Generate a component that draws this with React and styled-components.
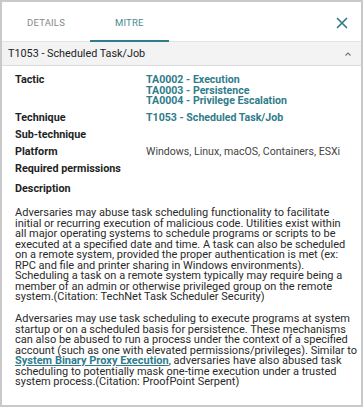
import React, { useState } from 'react';
import styled, { createGlobalStyle } from 'styled-components';

const GlobalStyle = createGlobalStyle`
  html, body {
    margin: 0;
    padding: 0;
    background: #ffffff;
  }
  * {
    box-sizing: border-box;
  }
`;

const font = `Roboto, "Liberation Sans", sans-serif`;
const teal = '#2f7c8b';

const details = {
  id: 'T1053',
  name: 'Scheduled Task/Job',
  tactics: ['TA0002 - Execution', 'TA0003 - Persistence', 'TA0004 - Privilege Escalation'],
  platform: 'Windows, Linux, macOS, Containers, ESXi',
};

// description lines kept as in the panel's wrapping
const firstParagraph = [
  'Adversaries may abuse task scheduling functionality to facilitate',
  'initial or recurring execution of malicious code. Utilities exist within',
  'all major operating systems to schedule programs or scripts to be',
  'executed at a specified date and time. A task can also be scheduled',
  'on a remote system, provided the proper authentication is met (ex:',
  'RPC and file and printer sharing in Windows environments).',
  'Scheduling a task on a remote system typically may require being a',
  'member of an admin or otherwise privileged group on the remote',
  'system.(Citation: TechNet Task Scheduler Security)',
];

function MitrePanel() {
  const [activeTab, setActiveTab] = useState('mitre');
  const [open, setOpen] = useState(true);

  return (
    <Frame>
      <TabBar>
        <Tab $active={activeTab === 'details'} onClick={() => setActiveTab('details')}>
          Details
        </Tab>
        <Tab $active={activeTab === 'mitre'} onClick={() => setActiveTab('mitre')}>
          Mitre
        </Tab>
        <CloseButton aria-label="Close">
          <svg width="12" height="12" viewBox="0 0 12 12">
            <path d="M1.5 1.5 L10.5 10.5 M10.5 1.5 L1.5 10.5" stroke={teal} strokeWidth="1.7" strokeLinecap="round" />
          </svg>
        </CloseButton>
      </TabBar>

      <SectionHeader onClick={() => setOpen(!open)}>
        <span>{details.id} - {details.name}</span>
        <Caret>
          <svg width="6" height="4" viewBox="0 0 6 4">
            <path d="M0.5 3.5 L3 1 L5.5 3.5" stroke="#777" strokeWidth="1.2" fill="none" />
          </svg>
        </Caret>
      </SectionHeader>

      {open && (
        <Body>
          <InfoGrid>
            <Label>Tactic</Label>
            <Value>
              {details.tactics.map((t) => (
                <Link key={t}>{t}</Link>
              ))}
            </Value>

            <Label>Technique</Label>
            <Value>
              <Link>{details.id} - {details.name}</Link>
            </Value>

            <Label>Sub-technique</Label>
            <Value />

            <Label>Platform</Label>
            <Value $plain>{details.platform}</Value>

            <Label>Required permissions</Label>
            <Value />
          </InfoGrid>

          <DescLabel>Description</DescLabel>

          <Paragraph>
            {firstParagraph.map((line) => (
              <Line key={line}>{line}</Line>
            ))}
          </Paragraph>
          <Paragraph>
            <Line>Adversaries may use task scheduling to execute programs at system</Line>
            <Line>startup or on a scheduled basis for persistence. These mechanisms</Line>
            <Line>can also be abused to run a process under the context of a specified</Line>
            <Line>account (such as one with elevated permissions/privileges). Similar to</Line>
            <Line>
              <InlineLink>System Binary Proxy Execution</InlineLink>, adversaries have also abused task
            </Line>
            <Line>scheduling to potentially mask one-time execution under a trusted</Line>
            <Line>system process.(Citation: ProofPoint Serpent)</Line>
          </Paragraph>
        </Body>
      )}
    </Frame>
  );
}

export default function App() {
  return (
    <>
      <GlobalStyle />
      <MitrePanel />
    </>
  );
}

const Frame = styled.div`
  width: 363px;
  height: 407px;
  border: 2px solid #c9c9c9;
  background: #fff;
  display: flex;
  flex-direction: column;
  overflow: hidden;
  font-family: ${font};
`;

const TabBar = styled.div`
  display: flex;
  align-items: stretch;
  height: 40px;
  border-bottom: 1px solid #e3e3e3;
  flex-shrink: 0;
`;

const Tab = styled.button`
  background: none;
  border: none;
  border-bottom: 2px solid ${(p) => (p.$active ? teal : 'transparent')};
  margin: 0 0 -1px;
  padding: 2px 25px 0;
  font-family: ${font};
  font-size: 9.5px;
  text-transform: uppercase;
  letter-spacing: 0.2px;
  color: ${(p) => (p.$active ? '#4a8a98' : '#888')};
  cursor: pointer;
`;

const CloseButton = styled.button`
  margin-left: auto;
  width: 38px;
  background: none;
  border: none;
  padding: 2px 0 0;
  display: flex;
  align-items: center;
  justify-content: center;
  cursor: pointer;
`;

const SectionHeader = styled.div`
  display: flex;
  align-items: center;
  justify-content: space-between;
  height: 24px;
  padding: 0 8px 0 6px;
  background: #f3f3f3;
  border-bottom: 1px solid #dcdcdc;
  font-size: 10.8px;
  color: #222;
  flex-shrink: 0;
  cursor: pointer;
`;

const Caret = styled.span`
  display: flex;
  align-items: center;
  margin-right: 2px;
`;

const Body = styled.div`
  padding: 9px 2px 0 13px;
  color: #222;
`;

const InfoGrid = styled.div`
  display: grid;
  grid-template-columns: 131px 1fr;
  row-gap: 6.5px;
  line-height: 10.5px;
`;

const Label = styled.div`
  font-size: 10.8px;
  font-weight: 700;
  color: #1f1f1f;
  min-height: 10.5px;
`;

const Value = styled.div`
  display: flex;
  flex-direction: column;
  font-size: ${(p) => (p.$plain ? '10.6px' : '10.6px')};
  color: ${(p) => (p.$plain ? '#444' : teal)};
  font-weight: ${(p) => (p.$plain ? 400 : 700)};
  white-space: nowrap;
`;

const Link = styled.span`
  cursor: pointer;
`;

const DescLabel = styled.div`
  margin-top: 9.5px;
  font-size: 10.8px;
  line-height: 10.5px;
  font-weight: 700;
  color: #1f1f1f;
`;

const Paragraph = styled.p`
  margin: 13.5px 0 0;
  font-size: 11px;
  line-height: 10.5px;
  color: #2a2a2a;

  & + & {
    margin-top: 11.5px;
  }
`;

const Line = styled.span`
  display: block;
  white-space: nowrap;
`;

const InlineLink = styled.a`
  color: ${teal};
  font-weight: 700;
  text-decoration: underline;
  cursor: pointer;
`;
